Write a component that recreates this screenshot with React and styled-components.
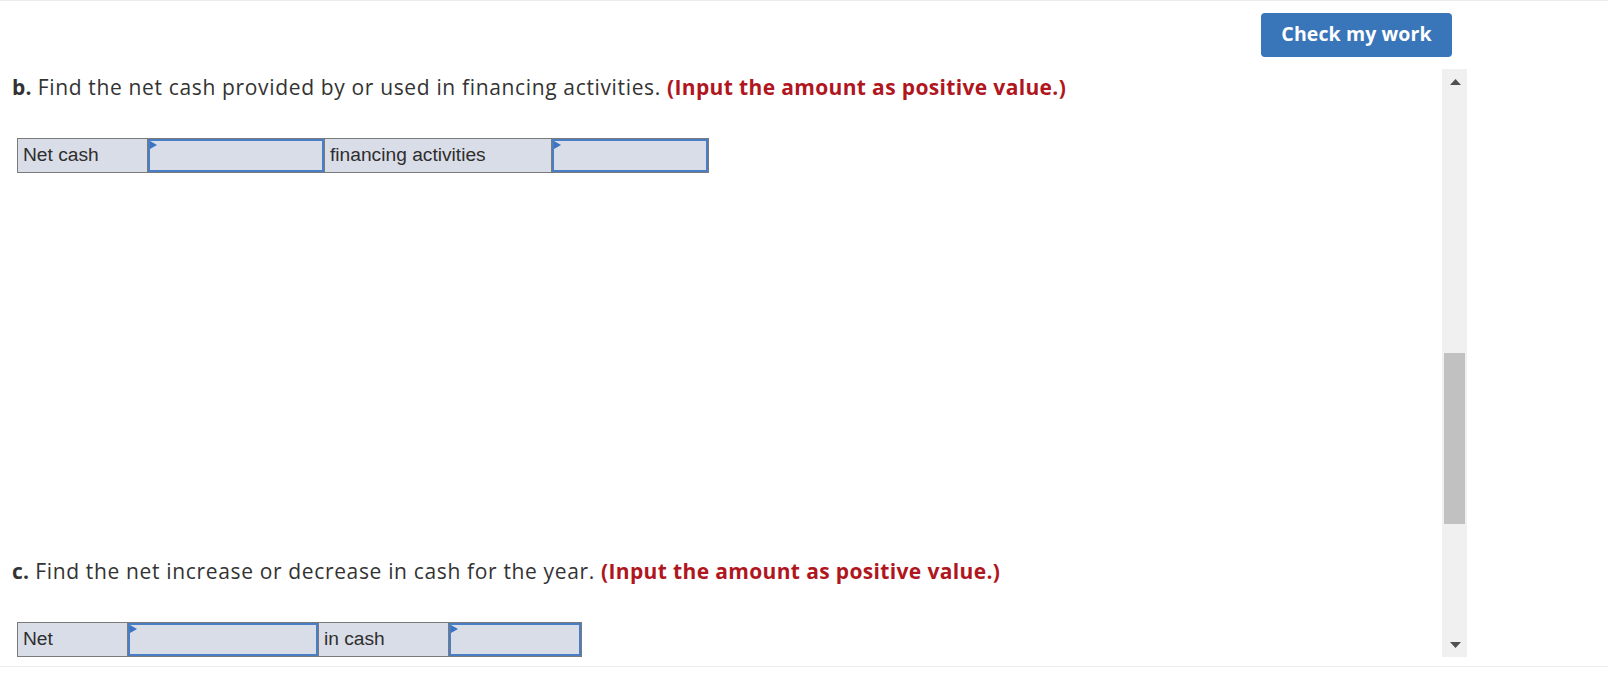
import React from "react";
import styled, { createGlobalStyle } from "styled-components";

const GlobalStyle = createGlobalStyle`
  html, body { margin: 0; padding: 0; background: #ffffff; }
  * { box-sizing: border-box; }
`;

const Page = styled.div`
  width: 1608px;
  height: 676px;
  display: flex;
  flex-direction: column;
  border-top: 1px solid #ececec;
  background: #fff;
  overflow: hidden;
`;

const Header = styled.header`
  height: 68px;
  flex: 0 0 68px;
  display: flex;
  justify-content: flex-end;
  align-items: flex-start;
  padding: 12px 156px 0 0;
`;

const CheckButton = styled.button`
  width: 191px;
  height: 44px;
  border: none;
  border-radius: 4px;
  padding: 0 0 4px;
  background: #3975b9;
  color: #ffffff;
  font-family: "Open Sans", Lato, sans-serif;
  font-weight: 700;
  font-size: 19.5px;
  letter-spacing: 0.1px;
  cursor: pointer;
`;

const Body = styled.div`
  flex: 0 0 588px;
  height: 588px;
  display: flex;
`;

const Content = styled.main`
  width: 1442px;
  flex: 0 0 1442px;
  overflow: hidden;
  padding-left: 12px;
`;

const Question = styled.p`
  margin: 0;
  padding-top: ${(p) => p.$top}px;
  font-family: "Open Sans", Lato, sans-serif;
  font-size: 21px;
  line-height: 25px;
  letter-spacing: 0.65px;
  color: #333333;
  white-space: nowrap;
`;

const Part = styled.b`
  font-weight: 700;
  letter-spacing: 0.2px;
`;

const Hint = styled.b`
  font-weight: 700;
  letter-spacing: 0.35px;
  color: #b0161e;
`;

const AnswerRow = styled.div`
  display: flex;
  width: fit-content;
  height: 35px;
  margin: 38px 0 0 5px;
  border: 1px solid #7a7a7a;
  background: #d9dde8;
`;

const LabelCell = styled.div`
  width: ${(p) => p.$w}px;
  height: 100%;
  display: flex;
  align-items: center;
  padding: 0 0 1px 5px;
  border-left: ${(p) => (p.$first ? "none" : "1px solid #7a7a7a")};
  font-family: "Liberation Sans", Arial, sans-serif;
  font-size: 19.2px;
  color: #2e2e2e;
  white-space: nowrap;
`;

const InputWrap = styled.div`
  width: ${(p) => p.$w}px;
  height: 100%;
  border-left: 1px solid #7a7a7a;
  position: relative;
`;

const AmountInput = styled.input`
  display: block;
  width: 100%;
  height: 100%;
  margin: 0;
  border: 2px solid #4a7ec4;
  background: #d9dde8;
  outline: none;
  font-family: "Liberation Sans", Arial, sans-serif;
  font-size: 19.2px;
  padding: 0 6px;
`;

const Flag = styled.span`
  position: absolute;
  top: 2px;
  left: 2px;
  width: 0;
  height: 0;
  border-top: 4.5px solid transparent;
  border-bottom: 4.5px solid transparent;
  border-left: 7px solid #3a74c2;
`;

const Spacer = styled.div`
  height: ${(p) => p.$h}px;
`;

const ScrollTrack = styled.div`
  width: 25px;
  flex: 0 0 25px;
  background: #f0f0f0;
  display: flex;
  flex-direction: column;
`;

const ScrollButton = styled.div`
  height: 25px;
  flex: 0 0 25px;
  display: flex;
  align-items: center;
  justify-content: center;
  padding-left: 1px;
`;

const ThumbArea = styled.div`
  flex: 1;
  padding: 0 2px;
`;

const Thumb = styled.div`
  height: 171px;
  background: #c1c1c1;
`;

const Footer = styled.div`
  flex: 0 0 10px;
  height: 10px;
  border-bottom: 1px solid #ececec;
`;

function Answer({ cells }) {
  return (
    <AnswerRow>
      {cells.map((c, i) =>
        c.label !== undefined ? (
          <LabelCell key={i} $w={c.w} $first={i === 0}>
            {c.label}
          </LabelCell>
        ) : (
          <InputWrap key={i} $w={c.w}>
            <AmountInput type="text" aria-label="amount" />
            <Flag />
          </InputWrap>
        )
      )}
    </AnswerRow>
  );
}

export default function App() {
  return (
    <>
      <GlobalStyle />
      <Page>
        <Header>
          <CheckButton>Check my work</CheckButton>
        </Header>
        <Body>
          <Content>
            <Question $top={6}>
              <Part>b.</Part> Find the net cash provided by or used in financing activities.{" "}
              <Hint>(Input the amount as positive value.)</Hint>
            </Question>
            <Answer
              cells={[
                { label: "Net cash", w: 129 },
                { w: 177 },
                { label: "financing activities", w: 227 },
                { w: 157 },
              ]}
            />
            <Spacer $h={386} />
            <Question $top={0}>
              <Part>c.</Part> Find the net increase or decrease in cash for the year.{" "}
              <Hint>(Input the amount as positive value.)</Hint>
            </Question>
            <Answer
              cells={[
                { label: "Net", w: 109 },
                { w: 191 },
                { label: "in cash", w: 130 },
                { w: 133 },
              ]}
            />
          </Content>
          <ScrollTrack>
            <ScrollButton>
              <svg width="11" height="6" viewBox="0 0 11 6">
                <polygon points="5.5,0 11,6 0,6" fill="#505050" />
              </svg>
            </ScrollButton>
            <ThumbArea>
              <Thumb style={{ marginTop: 259 }} />
            </ThumbArea>
            <ScrollButton>
              <svg width="11" height="6" viewBox="0 0 11 6">
                <polygon points="0,0 11,0 5.5,6" fill="#505050" />
              </svg>
            </ScrollButton>
          </ScrollTrack>
        </Body>
        <Footer />
      </Page>
    </>
  );
}
